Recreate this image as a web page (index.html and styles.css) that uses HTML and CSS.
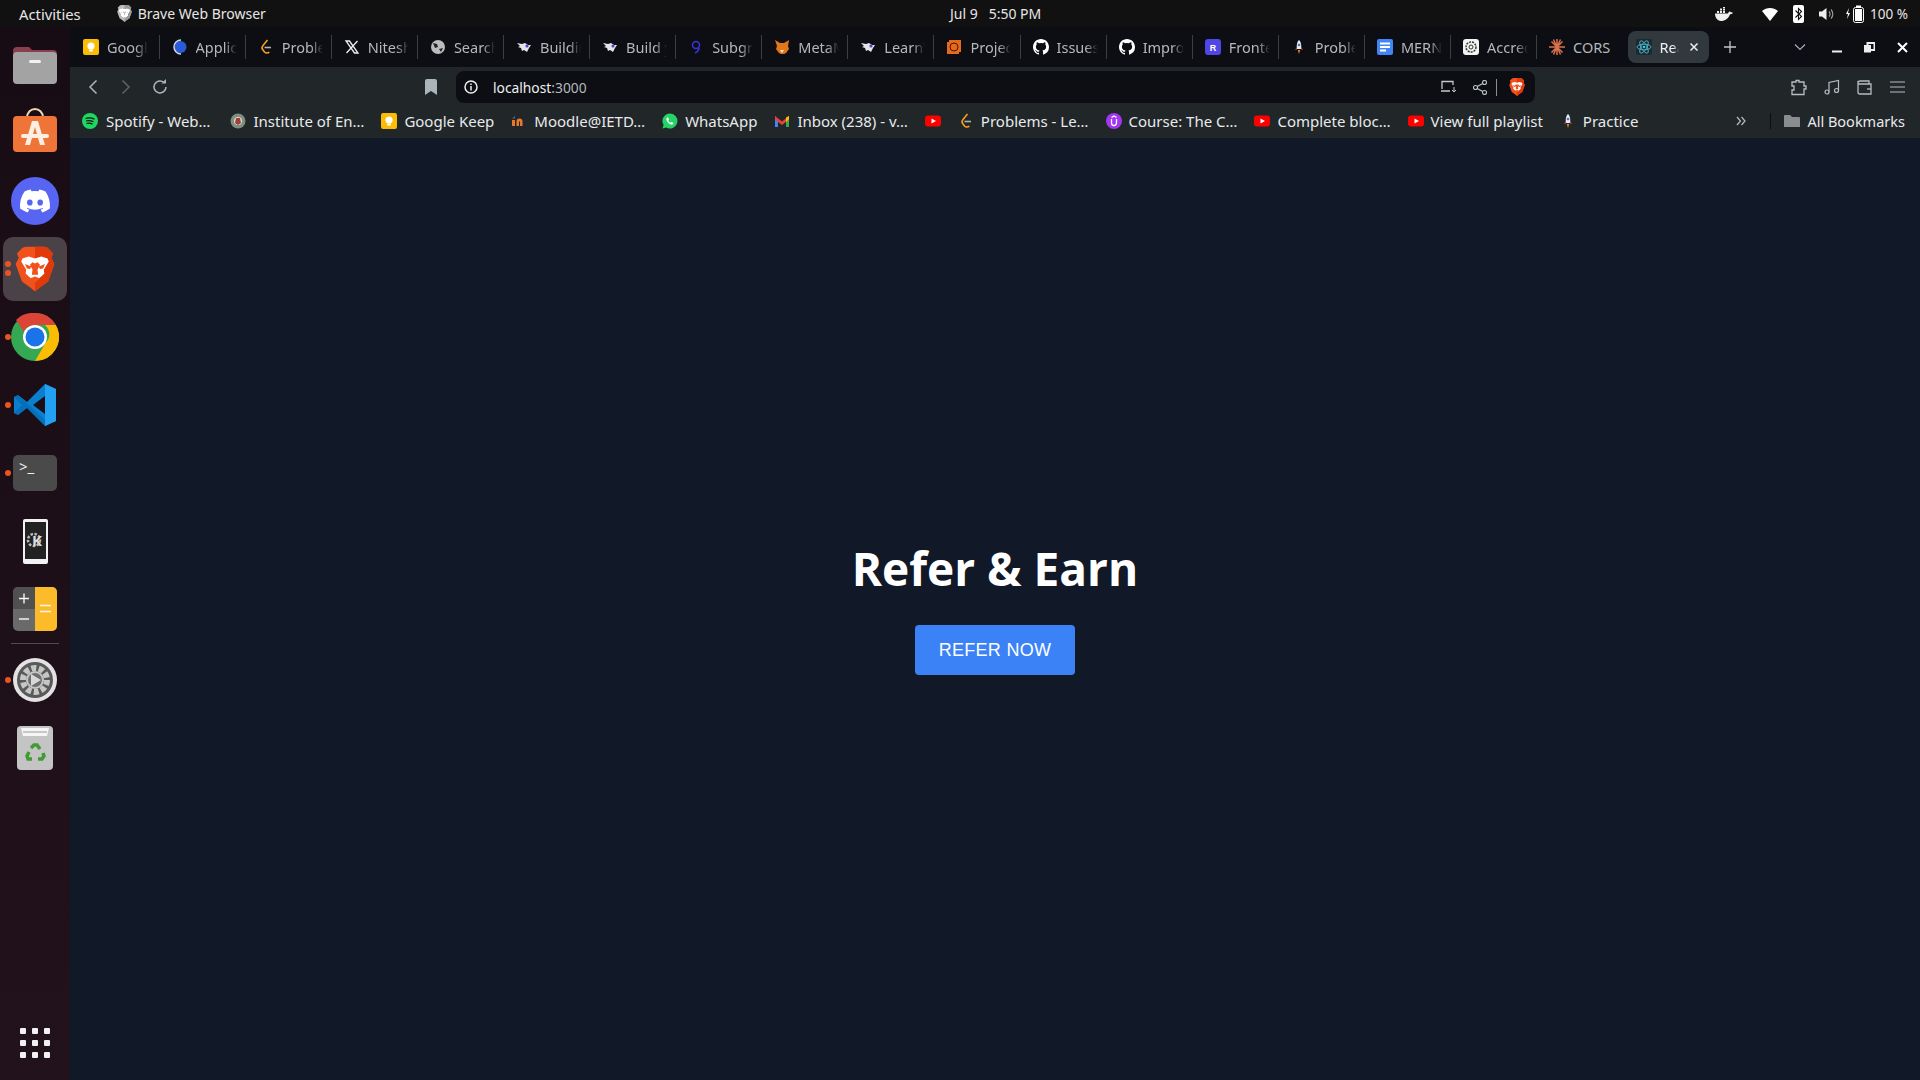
FILE: index.html
```html
<!DOCTYPE html>
<html lang="en">
<head>
    <meta charset="UTF-8">
    <title>Refer &amp; Earn</title>
    <link rel="stylesheet" href="styles.css">
</head>
<body>
    <svg class="defs" width="0" height="0">
        <symbol id="i-keep" viewBox="0 0 16 16"><rect width="16" height="16" rx="2" fill="#fbbc04"/><circle cx="8" cy="7" r="3.6" fill="#fff"/><rect x="6.2" y="10.5" width="3.6" height="2" fill="#fff"/></symbol>
        <symbol id="i-leet" viewBox="0 0 16 16"><path d="M9.500 1 5 6.500a3.400 3.400 0 0 0 0 4.500l1.500 2a3.300 3.300 0 0 0 4.800 0" fill="none" stroke="#f89f1b" stroke-width="1.600"/><path d="M6.500 8.500h6.500" stroke="#b3b3b3" stroke-width="1.600"/></symbol>
        <symbol id="i-bird" viewBox="0 0 16 16"><path d="M1 4l5 1 3-1 3 2 3 0-2 3-2 4-3-2-2 1-1-3-3-1 2-1z" fill="#e4e4ea"/><circle cx="11" cy="7" r="1.6" fill="#4b4bc8"/></symbol>
        <symbol id="i-gh" viewBox="0 0 16 16"><path fill="#fff" d="M8 0C3.58 0 0 3.58 0 8c0 3.54 2.29 6.53 5.47 7.59.4.07.55-.17.55-.38v-1.34c-2.23.49-2.69-1.07-2.69-1.07-.36-.92-.89-1.17-.89-1.17-.73-.5.05-.49.05-.49.8.06 1.23.83 1.23.83.71 1.22 1.87.87 2.33.66.07-.52.28-.87.51-1.07-1.78-.2-3.64-.89-3.64-3.95 0-.87.31-1.59.82-2.15-.08-.2-.36-1.02.08-2.12 0 0 .67-.21 2.2.82a7.7 7.7 0 0 1 4 0c1.53-1.04 2.2-.82 2.2-.82.44 1.1.16 1.92.08 2.12.51.56.82 1.27.82 2.15 0 3.07-1.87 3.75-3.65 3.95.29.25.54.73.54 1.48v2.2c0 .21.15.46.55.38A8 8 0 0 0 16 8c0-4.42-3.58-8-8-8z"/></symbol>
        <symbol id="i-rocket" viewBox="0 0 16 16"><path d="M8 1c2 2 2.4 4 2.2 9H5.800C5.600 5 6 3 8 1z" fill="#e8e8ee"/><circle cx="8" cy="6" r="1.300" fill="#3579e0"/><path d="M5.800 8 4 11l2-.5zM10.200 8 12 11l-2-.5z" fill="#d9442f"/><path d="M7 11h2l-1 4z" fill="#f6a623"/></symbol>
        <symbol id="i-yt" viewBox="0 0 16 16"><rect y="2.500" width="16" height="11" rx="3" fill="#f00"/><path d="M6.500 5.500 11 8l-4.500 2.500z" fill="#fff"/></symbol>
        <symbol id="i-lion" viewBox="0 0 32 36"><path d="M16 0h-7L6 1 1.500 5.500 3 9l-2.500 5 5 14 7 5L16 36l3.500-3 7-5 5-14L29 9l1.500-3.500L26 1l-3-1z" fill="#f1511b"/><path d="M16 0h7l3 1 4.500 4.500L29 9l2.500 5-5 14-7 5-3.500 3z" fill="#e03a0c"/><path d="M6 9.500l5-1.500 5 1.500L21 8l5 1.500 1 2.500-4 6.500.5 3-2.500 2.500-5 4-5-4-2.500-2.500.5-3L5 12z" fill="#fff"/><path d="M14 12.500l2 1 2-1 2 2-2 4 .5 4h-5l.5-4-2-4zM8 14l5 2-1 2-2.500-.5zM24 14l-5 2 1 2 2.500-.5zM12 25.500l4-1.500 4 1.500-4 3.500z" fill="#f1511b"/></symbol>
    </svg>

    <div class="topbar">
        <span class="activities">Activities</span>
        <svg class="app-icon" width="15" height="17" viewBox="0 0 32 36"><use href="#i-lion"/></svg>
        <span class="app-name">Brave Web Browser</span>
        <span class="clock">Jul 9 &nbsp; 5:50 PM</span>
        <div class="tray">
            <svg class="tray-docker" width="18" height="14" viewBox="0 0 18 14"><path d="M0 6.500h13c.4-1.500 1.500-2 2-2 .4.700 2 .7 3 1.200-.7 1.300-2 1.500-3 1.500C13.500 11.500 10 14 6 14 2 14 0 10 0 6.500z" fill="#eee"/><path d="M2 4h2v2H2zM5 4h2v2H5zM8 4h2v2H8zM5 1.500h2v2H5zM8 1.500h2v2H8zM8-1h2v2H8z" fill="#eee"/></svg>
            <svg class="tray-wifi" width="16" height="14" viewBox="0 0 16 14"><path d="M0 4c4.500-4 11.500-4 16 0L8 14z" fill="#fff"/></svg>
            <svg class="tray-bt" width="11" height="18" viewBox="0 0 11 18"><rect width="11" height="18" rx="2" fill="#fff"/><path d="M2.500 5.500l6 6-3 3v-11l3 3-6 6" fill="none" stroke="#111" stroke-width="1.100"/></svg>
            <svg class="tray-vol" width="15" height="14" viewBox="0 0 15 14"><path d="M0 4.500h3L7.500 1v12L3 9.500H0z" fill="#eee"/><path d="M10 4.500a3.500 3.500 0 0 1 0 5M12 2.500a6.500 6.500 0 0 1 0 9" fill="none" stroke="#999" stroke-width="1.200"/></svg>
            <svg class="tray-batt" width="20" height="18" viewBox="0 0 20 18"><path d="M4 3 1 9h2l-1 5 3-6H3z" fill="#fff"/><rect x="8.500" y="2.500" width="10" height="15" rx="2" fill="none" stroke="#fff"/><rect x="11" y="0.500" width="5" height="2" fill="#fff"/><rect x="10" y="4" width="7" height="12" fill="#fff"/></svg>
            <span class="tray-pct">100 %</span>
        </div>
    </div>

    <div class="desktop">
        <nav class="dock">
            <div class="dock-item">
                <svg width="44" height="40" viewBox="0 0 44 40"><path d="M0 6a4 4 0 0 1 4-4h12l3 3h21a4 4 0 0 1 4 4v8H0z" fill="#8a3f4e"/><rect y="7" width="44" height="32" rx="4" fill="#a3a3a3"/><rect x="16" y="15" width="12" height="3" rx="1.500" fill="#f1f1f1"/></svg>
            </div>
            <div class="dock-item">
                <svg class="store-icon" width="44" height="46" viewBox="0 0 44 46"><path d="M14 10c0-12 16-12 16 0" fill="none" stroke="#f0d6b0" stroke-width="2"/><rect y="8" width="44" height="36" rx="4" fill="#ee7438"/><path d="M19 13h6l7 24h-5l-5-18-5 18h-5z" fill="#fbeee2"/><rect x="8" y="26" width="28" height="4" rx="2" fill="#fbeee2"/></svg>
            </div>
            <div class="dock-item">
                <svg width="48" height="48" viewBox="0 0 48 48"><circle cx="24" cy="24" r="24" fill="#5865f2"/><path d="M34.500 14.500a25 25 0 0 0-6.200-1.900l-.8 1.600a23 23 0 0 0-7 0l-.8-1.600a25 25 0 0 0-6.200 1.900C9.600 20.300 8.600 26 9.100 31.600a25 25 0 0 0 7.600 3.800l1.600-2.600-2.500-1.200.6-.5a18 18 0 0 0 15.200 0l.6.5-2.500 1.200 1.600 2.600a25 25 0 0 0 7.600-3.800c.6-6.500-1.100-12.100-4.400-17.100z" fill="#fff"/><ellipse cx="18.800" cy="25.500" rx="2.800" ry="3.100" fill="#5865f2"/><ellipse cx="29.200" cy="25.500" rx="2.800" ry="3.100" fill="#5865f2"/></svg>
            </div>
            <div class="dock-item dock-active">
                <span class="dot dot-a"></span><span class="dot dot-b"></span>
                <svg width="40" height="46" viewBox="0 0 32 36"><use href="#i-lion"/></svg>
            </div>
            <div class="dock-item">
                <span class="dot"></span>
                <svg width="48" height="48" viewBox="0 0 48 48"><circle cx="24" cy="24" r="24" fill="#34a853"/><path d="M24 0a24 24 0 0 1 20.800 12H24a12 12 0 0 0-11 7L5 7A24 24 0 0 1 24 0z" fill="#db4437"/><path d="M44.800 12A24 24 0 0 1 24 48l10.500-18A12 12 0 0 0 34 12z" fill="#fbbc04"/><circle cx="24" cy="24" r="12" fill="#fff"/><circle cx="24" cy="24" r="9.500" fill="#1a73e8"/></svg>
            </div>
            <div class="dock-item">
                <span class="dot"></span>
                <svg width="44" height="44" viewBox="0 0 44 44"><path d="M32 1 14 19 5 12 1 14v16l4 2 9-7 18 18 11-5V6zM32 13v18l-12-9z" fill="#0a7fd0"/><path d="M32 1l11 5v32l-11 5z" fill="#22a0f2"/><path d="M1 14l4-2 27 25v6L14 25 5 32l-4-2 8-8z" fill="#0065a9" opacity=".55"/></svg>
            </div>
            <div class="dock-item">
                <span class="dot"></span>
                <div class="terminal"><span class="terminal-prompt">&gt;_</span></div>
            </div>
            <div class="dock-item">
                <svg width="25" height="45" viewBox="0 0 25 45"><rect width="25" height="45" rx="2" fill="#f2f2f2"/><rect x="2" y="3" width="21" height="37" fill="#222"/><circle cx="11" cy="21" r="6" fill="none" stroke="#bbb" stroke-width="2.500" stroke-dasharray="2.500 1.500"/><text x="14" y="27" font-size="15" font-weight="700" fill="#dcdcdc" text-anchor="middle" font-family="Noto Sans">K</text></svg>
            </div>
            <div class="dock-item">
                <svg width="44" height="44" viewBox="0 0 44 44"><rect width="44" height="44" rx="5" fill="#6a6a6a"/><path d="M5 0h17v22H0V5a5 5 0 0 1 5-5z" fill="#505050"/><path d="M22 0h17a5 5 0 0 1 5 5v34a5 5 0 0 1-5 5H22z" fill="#fdbb2a"/><path d="M6 11.500h10M11 6.500v10M6 32h10M27 18.500h11M27 24.500h11" stroke="#f4f4f4" stroke-width="1.400"/></svg>
            </div>
            <div class="dock-sep"></div>
            <div class="dock-item">
                <span class="dot"></span>
                <svg width="44" height="44" viewBox="0 0 44 44"><circle cx="22" cy="22" r="22" fill="#e3e3e3"/><circle cx="22" cy="22" r="18" fill="#5a5a5a"/><circle cx="22" cy="22" r="12" fill="none" stroke="#c6c6c6" stroke-width="6" stroke-dasharray="5 2.500"/><circle cx="22" cy="22" r="8" fill="#6e6e6e" stroke="#c6c6c6" stroke-width="2"/><path d="M18 16l10 6-10 6z" fill="#d8d8d8"/></svg>
            </div>
            <div class="dock-item">
                <svg width="36" height="44" viewBox="0 0 36 44"><rect width="36" height="44" rx="4" fill="#c4c4c4"/><path d="M4 2h28l-2 8H6z" fill="#f5f5f5"/><path d="M6 6h24" stroke="#999"/><g fill="none" stroke="#3f9c35" stroke-width="3.500"><path d="M14 22l3-3h3l3 4"/><path d="M26 27l1 3-2 3h-4"/><path d="M15 33h-4l-1-3 2-4"/></g></svg>
            </div>
            <div class="dock-grid">
                <i></i><i></i><i></i><i></i><i></i><i></i><i></i><i></i><i></i>
            </div>
        </nav>

        <div class="browser">
            <div class="tabbar">
                <div class="tab"><svg class="fav"><use href="#i-keep"/></svg><span class="tab-title">Google Keep</span></div>
                <div class="tab"><svg class="fav" viewBox="0 0 16 16"><circle cx="8.500" cy="8" r="6" fill="#2a5bd7"/><path d="M9 1a7 7 0 1 0 0 14" fill="none" stroke="#cfd6e6" stroke-width="1.500"/></svg><span class="tab-title">Applications</span></div>
                <div class="tab"><svg class="fav"><use href="#i-leet"/></svg><span class="tab-title">Problems</span></div>
                <div class="tab"><svg class="fav" viewBox="0 0 16 16"><path d="M2 2h3.500l8.500 12h-3.500zM13.500 2 2.500 14" fill="none" stroke="#eee" stroke-width="1.300"/></svg><span class="tab-title">Nitesh</span></div>
                <div class="tab"><svg class="fav" viewBox="0 0 16 16"><circle cx="8" cy="8" r="7" fill="#bcbcbc"/><path d="M3 4l4 1 1 3-3 1zM9 10l4-1-2 4z" fill="#222"/></svg><span class="tab-title">Search</span></div>
                <div class="tab"><svg class="fav"><use href="#i-bird"/></svg><span class="tab-title">Building</span></div>
                <div class="tab"><svg class="fav"><use href="#i-bird"/></svg><span class="tab-title">Build y</span></div>
                <div class="tab"><svg class="fav" viewBox="0 0 16 16"><circle cx="8" cy="6" r="3.500" fill="none" stroke="#3b35d8" stroke-width="1.500"/><path d="M11 9c0 3-2 4-4 5" fill="none" stroke="#3b35d8" stroke-width="1.500"/></svg><span class="tab-title">Subgraph</span></div>
                <div class="tab"><svg class="fav" viewBox="0 0 16 16"><path d="M1 1l5 3h4l5-3-1 6 1 3-3 4-2 1H7l-2-1-3-4 1-3z" fill="#e2761b"/><path d="M6 11h4l-2 3z" fill="#f5e1c8"/></svg><span class="tab-title">MetaMask</span></div>
                <div class="tab"><svg class="fav"><use href="#i-bird"/></svg><span class="tab-title">LearnWeb3</span></div>
                <div class="tab"><svg class="fav" viewBox="0 0 16 16"><rect x="1" y="1" width="14" height="14" fill="#e8691c"/><circle cx="8" cy="8" r="4" fill="none" stroke="#3a1a08"/><path d="M1 1h2v2H1zM13 13h2v2h-2z" fill="#0c0e12"/></svg><span class="tab-title">Project</span></div>
                <div class="tab"><svg class="fav"><use href="#i-gh"/></svg><span class="tab-title">Issues</span></div>
                <div class="tab"><svg class="fav"><use href="#i-gh"/></svg><span class="tab-title">Improve</span></div>
                <div class="tab"><svg class="fav" viewBox="0 0 16 16"><rect width="16" height="16" rx="3" fill="#4f46e5"/><text x="8" y="11.500" font-size="9" font-weight="700" fill="#fff" text-anchor="middle" font-family="Liberation Sans">R</text></svg><span class="tab-title">Frontend</span></div>
                <div class="tab"><svg class="fav"><use href="#i-rocket"/></svg><span class="tab-title">Problems</span></div>
                <div class="tab"><svg class="fav" viewBox="0 0 16 16"><rect width="16" height="16" rx="2" fill="#4285f4"/><path d="M3 4.500h10M3 8h10M3 11.500h6" stroke="#fff" stroke-width="1.800"/></svg><span class="tab-title">MERN</span></div>
                <div class="tab"><svg class="fav" viewBox="0 0 16 16"><rect width="16" height="16" rx="3" fill="#f4f4f4"/><circle cx="8" cy="8" r="5" fill="none" stroke="#333" stroke-width="1.500" stroke-dasharray="2 1"/><circle cx="8" cy="8" r="2" fill="none" stroke="#333"/></svg><span class="tab-title">Accredian</span></div>
                <div class="tab"><svg class="fav" viewBox="0 0 16 16"><path d="M8 0v16M0 8h16M2.500 2.500l11 11M13.500 2.500l-11 11M4.500 .5l7 15M11.500 .5l-7 15" stroke="#d9714a" stroke-width="1.500"/></svg><span class="tab-title">CORS</span></div>
                <div class="tab tab-active">
                    <svg class="fav" viewBox="0 0 16 16"><rect width="16" height="16" rx="2" fill="#1c2a30"/><g fill="none" stroke="#4fc3dc" stroke-width=".8"><ellipse cx="8" cy="8" rx="7" ry="2.800"/><ellipse cx="8" cy="8" rx="7" ry="2.800" transform="rotate(60 8 8)"/><ellipse cx="8" cy="8" rx="7" ry="2.800" transform="rotate(120 8 8)"/></g><circle cx="8" cy="8" r="1.300" fill="#4fc3dc"/></svg>
                    <span class="tab-title">React App</span>
                    <svg class="tab-close" width="10" height="10" viewBox="0 0 10 10"><path d="M1.500 1.500l7 7M8.500 1.500l-7 7" stroke="#eee" stroke-width="1.500"/></svg>
                </div>
                <svg class="tab-new" width="12" height="12" viewBox="0 0 12 12"><path d="M6 0v12M0 6h12" stroke="#c4c7c9" stroke-width="1.300"/></svg>
                <div class="win-controls">
                    <svg width="12" height="8" viewBox="0 0 12 8"><path d="M1 1.500l5 5 5-5" fill="none" stroke="#aab" stroke-width="1.200"/></svg>
                    <svg class="win-min" width="11" height="11" viewBox="0 0 11 11"><path d="M0 9.500h10" stroke="#eee" stroke-width="2"/></svg>
                    <svg class="win-max" width="11" height="11" viewBox="0 0 11 11"><path d="M3.500 1h7v7h-7z" fill="none" stroke="#eee" stroke-width="2"/><rect x="0" y="3" width="7" height="7.500" fill="#eee"/></svg>
                    <svg class="win-close" width="11" height="11" viewBox="0 0 11 11"><path d="M1 1l9 9M10 1l-9 9" stroke="#fff" stroke-width="2"/></svg>
                </div>
            </div>

            <div class="toolbar">
                <svg class="nav-back" width="10" height="16" viewBox="0 0 10 16"><path d="M8.500 1.500 2 8l6.500 6.500" fill="none" stroke="#aeb6bb" stroke-width="1.500"/></svg>
                <svg class="nav-fwd" width="10" height="16" viewBox="0 0 10 16"><path d="M1.500 1.500 8 8l-6.500 6.500" fill="none" stroke="#5b6367" stroke-width="1.500"/></svg>
                <svg class="nav-reload" width="16" height="16" viewBox="0 0 16 16"><path d="M14 8a6 6 0 1 1-2-4.500" fill="none" stroke="#aeb6bb" stroke-width="1.500"/><path d="M9.500 4.500h4.500V0z" fill="#aeb6bb"/></svg>
                <svg class="nav-mark" width="12" height="16" viewBox="0 0 12 16"><path d="M0 2a2 2 0 0 1 2-2h8a2 2 0 0 1 2 2v14l-6-4-6 4z" fill="#aab4ba"/></svg>
                <div class="addressbar">
                    <svg class="addr-info" width="14" height="14" viewBox="0 0 14 14"><circle cx="7" cy="7" r="6" fill="none" stroke="#eee" stroke-width="1.500"/><path d="M7 6v4.500M7 3.500v1.500" stroke="#eee" stroke-width="1.500"/></svg>
                    <span class="addr-url"><b>localhost</b>:3000</span>
                    <svg class="addr-install" width="16" height="14" viewBox="0 0 16 14"><path d="M1 9V1.500h11V5M0 11h9" fill="none" stroke="#c2c7ca" stroke-width="1.300"/><path d="M13 7v5M11 10l2 2 2-2" fill="none" stroke="#c2c7ca"/></svg>
                    <svg class="addr-share" width="14" height="15" viewBox="0 0 14 15"><g fill="none" stroke="#c2c7ca" stroke-width="1.100"><circle cx="11.500" cy="2.500" r="2"/><circle cx="2.500" cy="7.500" r="2"/><circle cx="11.500" cy="12.500" r="2"/><path d="M4.300 6.500l5.400-3M4.300 8.500l5.400 3"/></g></svg>
                    <span class="addr-sep"></span>
                    <svg class="addr-brave" width="16" height="18" viewBox="0 0 32 36"><use href="#i-lion"/></svg>
                </div>
                <div class="tools">
                    <svg width="16" height="17" viewBox="0 0 16 17"><path d="M1 3h4V1.500h3V3h5v4h2v3h-2v5.500H1V11h2V7H1z" fill="none" stroke="#b5bcc0" stroke-width="1.300"/></svg>
                    <svg width="16" height="16" viewBox="0 0 16 16"><g fill="none" stroke="#b5bcc0" stroke-width="1.200"><circle cx="3" cy="13" r="2"/><circle cx="12.500" cy="11.500" r="2"/><path d="M5 13V3.500l9.500-2V11.500"/></g></svg>
                    <svg width="16" height="15" viewBox="0 0 16 15"><g fill="none" stroke="#b5bcc0" stroke-width="1.300"><path d="M1 3a2 2 0 0 1 2-2h9v3M1 3v9a2 2 0 0 0 2 2h11V4H3a2 2 0 0 1-2-1z"/><path d="M10 9h4"/></g></svg>
                    <svg width="15" height="12" viewBox="0 0 15 12"><path d="M0 1h15M0 6h15M0 11h15" stroke="#b5bcc0" stroke-width="1.200"/></svg>
                </div>
            </div>

            <div class="bookmarks">
                <a class="bm"><svg class="fav" viewBox="0 0 16 16"><circle cx="8" cy="8" r="8" fill="#1ed760"/><path d="M3.500 5.500c3-1 6-.8 9 .8M4 8c2.500-.7 5-.5 7.500.8M4.500 10.500c2-.5 4-.4 6 .6" fill="none" stroke="#111" stroke-width="1.200"/></svg><span>Spotify - Web…</span></a>
                <a class="bm"><svg class="fav" viewBox="0 0 16 16"><circle cx="8" cy="8" r="7.500" fill="#7d8f7f"/><circle cx="8" cy="8" r="4" fill="#ddd"/><path d="M6 5h4l1 5-3 2-3-2z" fill="#a33d35"/></svg><span>Institute of En…</span></a>
                <a class="bm"><svg class="fav"><use href="#i-keep"/></svg><span>Google Keep</span></a>
                <a class="bm"><svg class="fav" viewBox="0 0 16 16"><path d="M1 13V7h3v6zM5.500 13V8.500a3 3 0 0 1 6 0V13H9V8.500H8V13z" fill="#e8782a"/><path d="M1 5.500 4 3v2.500z" fill="#666"/></svg><span>Moodle@IETD…</span></a>
                <a class="bm"><svg class="fav" viewBox="0 0 16 16"><path d="M8 .5a7.500 7.500 0 0 0-6.400 11.400L.5 15.500l3.700-1A7.500 7.500 0 1 0 8 .5z" fill="#25d366"/><path d="M5 4.500c-1 1-.8 3 1 5s4 2.600 5 1.500l.5-1-2-1-.8.800c-1-.4-2-1.400-2.400-2.400l.8-.8-1-2z" fill="#fff"/></svg><span>WhatsApp</span></a>
                <a class="bm"><svg class="fav" viewBox="0 0 16 16"><path d="M1 3v11h3V7z" fill="#4285f4"/><path d="M15 3v11h-3V7z" fill="#34a853"/><path d="M1 3l7 5.500L15 3v3.500L8 12 1 6.500z" fill="#ea4335"/><path d="M12 4.500 15 3v3.500l-3 2.500z" fill="#fbbc04"/></svg><span>Inbox (238) - v…</span></a>
                <a class="bm"><svg class="fav"><use href="#i-yt"/></svg></a>
                <a class="bm"><svg class="fav"><use href="#i-leet"/></svg><span>Problems - Le…</span></a>
                <a class="bm"><svg class="fav" viewBox="0 0 16 16"><circle cx="8" cy="8" r="8" fill="#a435f0"/><path d="M5.500 6v4a2.500 2.500 0 0 0 5 0V6M5.500 4.500 8 3l2.500 1.500" fill="none" stroke="#fff" stroke-width="1.300"/></svg><span>Course: The C…</span></a>
                <a class="bm"><svg class="fav"><use href="#i-yt"/></svg><span>Complete bloc…</span></a>
                <a class="bm"><svg class="fav"><use href="#i-yt"/></svg><span>View full playlist</span></a>
                <a class="bm"><svg class="fav"><use href="#i-rocket"/></svg><span>Practice</span></a>
                <svg class="bm-more" width="10" height="10" viewBox="0 0 10 10"><path d="M1 1l3.500 4L1 9M5.500 1 9 5 5.500 9" fill="none" stroke="#b5bcc0" stroke-width="1.200"/></svg>
                <span class="bm-sep"></span>
                <a class="bm bm-all"><svg class="fav" viewBox="0 0 16 16"><path d="M0 3a1 1 0 0 1 1-1h5l2 2h7a1 1 0 0 1 1 1v9H0z" fill="#8a8d90"/></svg><span>All Bookmarks</span></a>
            </div>

            <main class="content">
                <h1 class="title">Refer &amp; Earn</h1>
                <button class="refer-btn">REFER NOW</button>
            </main>
        </div>
    </div>
</body>
</html>
```

FILE: styles.css
```css
* {
    box-sizing: border-box;
}
html, body {
    height: 100%;
}
body {
    margin: 0;
    display: flex;
    flex-direction: column;
    height: 1080px;
    overflow: hidden;
    font-family: "Noto Sans", sans-serif;
    background-color: #111827;
    color: #e8eaec;
}
.defs {
    position: absolute;
}
.fav {
    width: 16px;
    height: 16px;
    flex: none;
}

/* top bar */
.topbar {
    position: relative;
    display: flex;
    align-items: center;
    flex: none;
    height: 27px;
    padding-left: 19px;
    background-color: #111111;
    font-size: 14px;
    color: #e6e6e6;
}
.activities {
    font-size: 14.8px;
}
.app-icon {
    margin-left: 36px;
    filter: grayscale(1) brightness(1.7);
}
.app-name {
    margin-left: 6px;
}
.clock {
    position: absolute;
    left: 950px;
    top: 4px;
    white-space: nowrap;
}
.tray {
    display: flex;
    align-items: center;
    margin-left: auto;
    padding-right: 12px;
}
.tray-wifi {
    margin-left: 29px;
}
.tray-bt {
    margin-left: 15px;
}
.tray-vol {
    margin-left: 15px;
}
.tray-batt {
    margin-left: 11px;
}
.tray-pct {
    margin-left: 5px;
    font-size: 13.5px;
}

/* dock */
.desktop {
    display: flex;
    flex: 1;
    min-height: 0;
}
.dock {
    display: flex;
    flex-direction: column;
    align-items: center;
    flex: none;
    width: 70px;
    padding-top: 6px;
    background: linear-gradient(#180c14, #22121b);
}
.dock-item {
    position: relative;
    display: flex;
    align-items: center;
    justify-content: center;
    flex: none;
    width: 64px;
    height: 64px;
    margin-bottom: 4px;
    border-radius: 10px;
}
.store-icon {
    margin-bottom: 4px;
}
.dock-active {
    background-color: #4a4246;
}
.dot {
    position: absolute;
    left: 2px;
    top: 29px;
    width: 6px;
    height: 6px;
    border-radius: 50%;
    background-color: #e95420;
}
.dot-a {
    top: 24px;
}
.dot-b {
    top: 33px;
}
.dock-sep {
    flex: none;
    width: 48px;
    height: 1px;
    margin: -2px 0 4px;
    background-color: #55494f;
}
.terminal {
    width: 44px;
    height: 36px;
    padding: 0 6px;
    border-radius: 5px;
    background-color: #4a4a4a;
}
.terminal-prompt {
    font-size: 15px;
    color: #f2f2f2;
}
.dock-grid {
    display: grid;
    grid-template-columns: repeat(3, 6px);
    gap: 6px;
    margin-top: auto;
    margin-bottom: 22px;
}
.dock-grid i {
    width: 6px;
    height: 6px;
    border-radius: 1px;
    background-color: #f2f2f2;
}

/* browser */
.browser {
    display: flex;
    flex-direction: column;
    flex: 1;
    min-width: 0;
}
.tabbar {
    display: flex;
    align-items: center;
    flex: none;
    height: 40px;
    padding-left: 1px;
    background-color: #0c0e13;
}
.tab {
    display: flex;
    align-items: center;
    flex: none;
    width: 86.1px;
    height: 24px;
    padding-left: 12px;
    border-right: 1px solid #3a3f43;
    font-size: 14.5px;
    color: #b4b8bb;
}
.tab:first-child {
    width: 88.6px;
}
.tab:nth-last-child(4) {
    border-right: none;
    width: 90.5px;
}
.tab-title {
    width: 41px;
    margin-left: 8px;
    overflow: hidden;
    white-space: nowrap;
    -webkit-mask-image: linear-gradient(to right, #000 70%, transparent);
    mask-image: linear-gradient(to right, #000 70%, transparent);
}
.tab:nth-last-child(4) .tab-title {
    -webkit-mask-image: none;
    mask-image: none;
}
.tab-active {
    width: 81px;
    height: 32px;
    padding-left: 8px;
    border-right: none;
    border-radius: 8px;
    background-color: #31393e;
    color: #eef0f1;
}
.tab-active .tab-title {
    width: 19px;
    margin-left: 8px;
}
.tab-close {
    margin-left: 10px;
}
.tab-new {
    margin-left: 15px;
}
.win-controls {
    display: flex;
    align-items: center;
    margin-left: auto;
    padding-right: 12px;
}
.win-min {
    margin-left: 26px;
}
.win-max {
    margin-left: 21px;
}
.win-close {
    margin-left: 22px;
}

.toolbar {
    display: flex;
    align-items: center;
    flex: none;
    height: 40px;
    padding-left: 18px;
    background-color: #212629;
}
.nav-fwd {
    margin-left: 23px;
}
.nav-reload {
    margin-left: 21px;
}
.nav-mark {
    margin-left: 257px;
}
.addressbar {
    display: flex;
    align-items: center;
    width: 1079px;
    height: 32px;
    margin-left: 19px;
    padding-left: 8px;
    border-radius: 8px;
    background-color: #0c0e13;
}
.addr-url {
    margin-left: 15px;
    font-size: 13.8px;
    color: #b4b8bb;
}
.addr-url b {
    font-weight: 400;
    color: #eef0f1;
}
.addr-install {
    margin-left: auto;
}
.addr-share {
    margin-left: 16px;
}
.addr-sep {
    width: 1px;
    height: 17px;
    margin-left: 9px;
    background-color: #8a8f92;
}
.addr-brave {
    margin: 0 10px 0 12px;
}
.tools {
    display: flex;
    align-items: center;
    gap: 17px;
    margin-left: auto;
    padding-right: 15px;
}

.bookmarks {
    display: flex;
    align-items: center;
    flex: none;
    height: 31px;
    padding: 0 15px 3px 12px;
    gap: 17px;
    background-color: #212629;
    font-size: 15px;
    color: #e8eaec;
}
.bm {
    display: flex;
    align-items: center;
    gap: 7px;
    white-space: nowrap;
}
.bm:first-child {
    gap: 8px;
    margin-right: 3px;
}
.bm-more {
    margin-left: auto;
    margin-right: 7px;
}
.bm-sep {
    width: 1px;
    height: 16px;
    margin-right: -4px;
    background-color: #0c0e13;
}
.bm-all {
    font-size: 14.5px;
}

/* page */
.content {
    display: flex;
    flex-direction: column;
    align-items: center;
    justify-content: center;
    flex: 1;
    background-color: #111827;
}
.title {
    margin: 1px 0 33px;
    font-family: "Open Sans", sans-serif;
    font-size: 46px;
    font-weight: 700;
    line-height: 48px;
    color: #ffffff;
}
.refer-btn {
    width: 160px;
    height: 50px;
    padding: 0;
    border: none;
    border-radius: 4px;
    background-color: #3b82f6;
    font-family: "Liberation Sans", Arial, sans-serif;
    font-size: 18px;
    letter-spacing: .3px;
    color: #ffffff;
    cursor: pointer;
}
```
